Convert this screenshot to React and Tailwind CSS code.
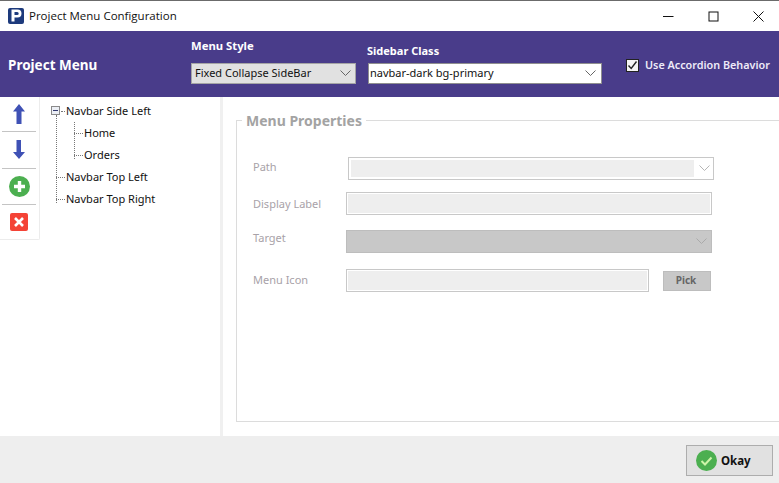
const ui = { fontFamily: '"Noto Sans", sans-serif' };

function Chevron({ color = "#666", className = "" }) {
  return (
    <svg width="11" height="7" viewBox="0 0 11 7" className={className}>
      <path d="M0.5 0.5 L5.5 5.5 L10.5 0.5" fill="none" stroke={color} strokeWidth="1" />
    </svg>
  );
}

function TitleBar() {
  return (
    <div className="h-[31px] bg-white border-t border-[#6b6b6b] flex items-center shrink-0">
      <div className="ml-2 mt-[-1px] w-4 h-4 rounded-[2px] bg-[#1d3a7c] flex items-center justify-center">
        <svg width="12" height="13" viewBox="0 0 12 13">
          <path fillRule="evenodd" d="M1.5 0.5 H7.5 A3.8 3.8 0 0 1 7.5 8.5 H4.5 V12.5 H1.5 Z M4.5 3 V6 H7.2 A1.5 1.5 0 0 0 7.2 3 Z" fill="#fff" />
        </svg>
      </div>
      <span className="ml-[5px] text-[11.5px] text-[#111] font-['Open_Sans',sans-serif] mt-[-1px]">Project Menu Configuration</span>
      <div className="ml-auto flex items-center mr-[15px] gap-[31px]">
        <svg width="11" height="11" viewBox="0 0 11 11"><path d="M0 5.5 H10.5" stroke="#111" strokeWidth="1" /></svg>
        <svg width="11" height="11" viewBox="0 0 11 11" className="ml-[3px]"><rect x="1" y="1" width="9" height="9" fill="none" stroke="#111" strokeWidth="1" /></svg>
        <svg width="11" height="11" viewBox="0 0 11 11" className="ml-[3px]"><path d="M0.5 0.5 L10.5 10.5 M10.5 0.5 L0.5 10.5" stroke="#111" strokeWidth="1" /></svg>
      </div>
    </div>
  );
}

function Header() {
  return (
    <div className="h-[66px] bg-[#493c8a] flex shrink-0 text-white" style={ui}>
      <div className="w-[191px] shrink-0 pl-2 pt-[25px] text-[13.5px] font-bold leading-[18px]">Project Menu</div>
      <div className="w-[176px] shrink-0 pt-[7px]">
        <div className="text-[11.3px] font-bold leading-[16px] h-[25px]">Menu Style</div>
        <div className="w-[165px] h-[21px] bg-[#e1e1e1] border border-[#a5a5a5] flex items-center pl-[3px] pr-[4px] text-[11px] text-[#111]">
          <span>Fixed Collapse SideBar</span>
          <Chevron className="ml-auto" />
        </div>
      </div>
      <div className="w-[259px] shrink-0 pt-[12px]">
        <div className="text-[11px] font-bold leading-[16px] h-[20px]">Sidebar Class</div>
        <div className="ml-[1px] w-[234px] h-[21px] bg-white border border-[#8f8f8f] flex items-center pl-[1px] pr-[5px] text-[11px] text-[#111]">
          <span>navbar-dark bg-primary</span>
          <Chevron className="ml-auto" />
        </div>
      </div>
      <div className="flex items-center h-[16px] mt-[26px]">
        <div className="w-[13px] h-[13px] border border-[#222] bg-[#f4f4f4] flex items-center justify-center">
          <svg width="11" height="11" viewBox="0 0 11 11"><path d="M1.5 5.5 L4.2 8.5 L9.5 1.5" fill="none" stroke="#222" strokeWidth="1.4" /></svg>
        </div>
        <span className="ml-[6px] text-[10.8px] font-semibold text-[#eeeaf8] whitespace-nowrap">Use Accordion Behavior</span>
      </div>
    </div>
  );
}

function Toolbar() {
  return (
    <div className="w-[40px] h-[143px] bg-white border-r border-b border-[#ececec] rounded-br-[2px] shrink-0 flex flex-col pl-[2px] pr-[3px]">
      <div className="h-[34px] flex items-center justify-center">
        <svg width="12" height="20" viewBox="0 0 12 20"><path d="M6 0 L12 7.5 H8.5 V20 H3.5 V7.5 H0 Z" fill="#3f51b5" /></svg>
      </div>
      <div className="h-[37px] border-t border-[#c4c4c4] flex items-center justify-center">
        <svg width="12" height="19" viewBox="0 0 12 19"><path d="M3.5 0 H8 V12 H12 L6 19 L0 12 H3.5 Z" fill="#3f51b5" /></svg>
      </div>
      <div className="h-[37px] border-t border-[#c4c4c4] flex items-center justify-center">
        <svg width="21" height="21" viewBox="0 0 21 21">
          <circle cx="10.5" cy="10.5" r="10.5" fill="#4caf50" />
          <path d="M10.5 5 V16 M5 10.5 H16" stroke="#fff" strokeWidth="3.4" />
        </svg>
      </div>
      <div className="h-[35px] border-t border-[#c4c4c4] flex items-center justify-center">
        <svg width="18" height="18" viewBox="0 0 18 18">
          <rect width="18" height="18" rx="2" fill="#f44336" />
          <path d="M5 5 L13 13 M13 5 L5 13" stroke="#fff" strokeWidth="2.6" />
        </svg>
      </div>
    </div>
  );
}

function TreeRow({ children, indent = 0 }) {
  return (
    <div className="h-[22px] flex items-center relative whitespace-nowrap text-[11px] text-[#111]" style={{ paddingLeft: indent }}>
      {children}
    </div>
  );
}

function Tree() {
  return (
    <div className="relative ml-[11px] pt-[3px] flex-1" style={ui}>
      <div className="absolute left-[5px] top-[18px] h-[88px] border-l border-dotted border-[#777]" />
      <div className="absolute left-[23px] top-[25px] h-[37px] border-l border-dotted border-[#777]" />
      <TreeRow indent={15}>
        <div className="absolute left-0 top-[6px] w-[9px] h-[9px] border border-[#8a8a8a] bg-[#eceff5] flex items-center justify-center">
          <div className="w-[5px] h-px bg-[#333a70]" />
        </div>
        <div className="absolute left-[10px] top-[11px] w-[4px] border-t border-dotted border-[#777]" />
        Navbar Side Left
      </TreeRow>
      <TreeRow indent={33}>
        <div className="absolute left-[23px] top-[11px] w-[9px] border-t border-dotted border-[#777]" />
        Home
      </TreeRow>
      <TreeRow indent={33}>
        <div className="absolute left-[23px] top-[11px] w-[9px] border-t border-dotted border-[#777]" />
        Orders
      </TreeRow>
      <TreeRow indent={15}>
        <div className="absolute left-[5px] top-[11px] w-[9px] border-t border-dotted border-[#777]" />
        Navbar Top Left
      </TreeRow>
      <TreeRow indent={15}>
        <div className="absolute left-[5px] top-[11px] w-[9px] border-t border-dotted border-[#777]" />
        Navbar Top Right
      </TreeRow>
    </div>
  );
}

function FormRow({ label, top, labelClass = "", children }) {
  return (
    <div className="flex items-center" style={{ marginTop: top }}>
      <div className={`w-[109px] shrink-0 pl-[16px] text-[11px] text-[#a8a2a8] whitespace-nowrap ${labelClass}`}>{label}</div>
      {children}
    </div>
  );
}

function Properties() {
  return (
    <div className="flex-1 min-w-0 overflow-hidden pl-[13px] pt-[23px]" style={ui}>
      <div className="relative w-[600px] h-[302px] border border-[#dcdcdc]">
        <div className="absolute left-[5px] top-[-9px] px-[4px] bg-white text-[14px] font-bold leading-[18px] text-[#a3a3a3] whitespace-nowrap">Menu Properties</div>
        <div className="pt-[13px]">
          <FormRow label="Path" top="23px" labelClass="mt-[-2px]">
            <div className="ml-[2px] w-[366px] h-[23px] shrink-0 border border-[#c8c8c8] bg-white flex items-center pl-[2px]">
              <div className="w-[343px] h-[17px] bg-[#eeeeee]" />
              <Chevron color="#b5b5b5" className="ml-[5px]" />
            </div>
          </FormRow>
          <FormRow label="Display Label" top="12px" labelClass="mt-[2px]">
            <div className="w-[366px] h-[23px] shrink-0 border border-[#c8c8c8] bg-[#eeeeee] shadow-[inset_0_0_0_1px_#ffffff]" />
          </FormRow>
          <div className="flex items-start mt-[15px]">
            <div className="w-[109px] shrink-0 pl-[16px] text-[11px] leading-[16px] text-[#a8a2a8]">Target</div>
            <div className="w-[366px] h-[23px] shrink-0 border border-[#bdbdbd] bg-[#c8c8c8] flex items-center pr-[4px]">
              <Chevron color="#aaaaaa" className="ml-auto" />
            </div>
          </div>
          <FormRow label="Menu Icon" top="16px">
            <div className="w-[303px] h-[23px] shrink-0 border border-[#c8c8c8] bg-[#eeeeee] shadow-[inset_0_0_0_1px_#ffffff]" />
            <div className="ml-[14px] w-[48px] h-[20px] shrink-0 border border-[#bdbdbd] bg-[#c8c8c8] flex items-center justify-center pr-[2px] text-[10px] font-bold text-[#666666]">Pick</div>
          </FormRow>
        </div>
      </div>
    </div>
  );
}

function Footer() {
  return (
    <div className="h-[47px] bg-[#eeeeee] flex items-start justify-end pt-[9px] pr-[6px] shrink-0" style={ui}>
      <div className="w-[87px] h-[31px] bg-[#e1e1e1] border border-[#adadad] flex items-center pl-[9px]">
        <svg width="21" height="21" viewBox="0 0 21 21">
          <circle cx="10.5" cy="10.5" r="10.5" fill="#4caf50" />
          <path d="M5.5 11 L9 14.5 L15.5 7.5" fill="none" stroke="#cdf5a8" strokeWidth="2" />
        </svg>
        <span className="ml-[4px] text-[11.5px] font-bold text-[#111]">Okay</span>
      </div>
    </div>
  );
}

export default function App() {
  return (
    <div className="w-[779px] h-[483px] bg-white flex flex-col overflow-hidden">
      <TitleBar />
      <Header />
      <div className="flex-1 min-h-0 flex">
        <div className="w-[220px] flex shrink-0">
          <Toolbar />
          <Tree />
        </div>
        <div className="w-[3px] bg-[#f0f0f0] shrink-0" />
        <Properties />
      </div>
      <Footer />
    </div>
  );
}
